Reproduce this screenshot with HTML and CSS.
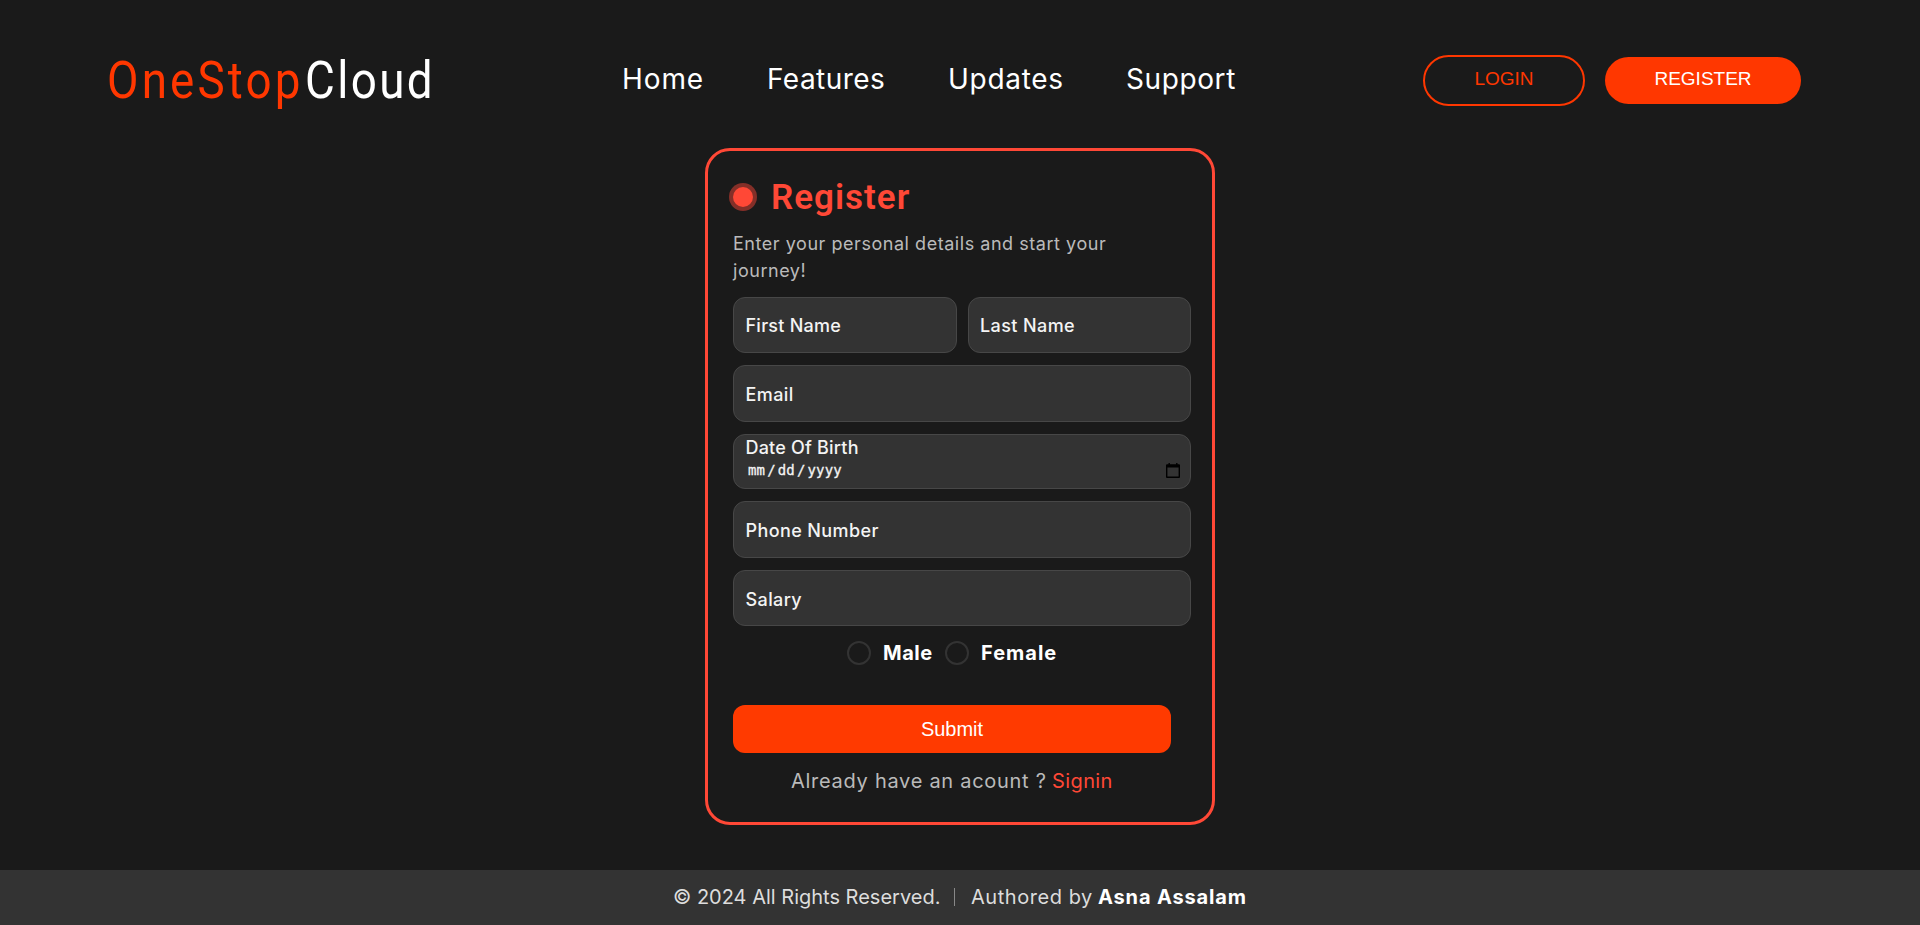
FILE: index.html
```html
<!DOCTYPE html>
<html lang="en">
<head>
<meta charset="utf-8">
<title>OneStopCloud - Register</title>
<link rel="stylesheet" href="styles.css">
</head>
<body>
<header class="header">
  <div class="logo"><span class="logo-accent">OneStop</span><span class="logo-rest">Cloud</span></div>
  <nav class="nav">
    <a class="nav-home">Home</a><a class="nav-features">Features</a><a class="nav-updates">Updates</a><a class="nav-support">Support</a>
  </nav>
  <div class="actions">
    <button class="btn btn-outline">LOGIN</button>
    <button class="btn btn-solid">REGISTER</button>
  </div>
</header>
<main class="main">
  <form class="card">
    <h1 class="title"><i class="dot"></i><span>Register</span></h1>
    <p class="message">Enter your personal details and start your<br>journey!</p>
    <div class="row">
      <div class="field short first"><span>First Name</span></div>
      <div class="field short"><span>Last Name</span></div>
    </div>
    <div class="field tall"><span>Email</span></div>
    <div class="field date">
      <span>Date Of Birth</span>
      <div class="date-value"><span class="mask"><b>mm</b><b>/</b><b>dd</b><b>/</b><b>yyyy</b></span>
        <svg class="cal" width="14" height="15" viewBox="0 0 14 15"><path fill="#000" fill-rule="evenodd" d="M2.500 0h1.400v1.300h6.200V0h1.400v1.300H13a1 1 0 0 1 1 1V14a1 1 0 0 1-1 1H1a1 1 0 0 1-1-1V2.300a1 1 0 0 1 1-1h1.500zM1.400 4.600v9h11.200v-9z"/></svg>
      </div>
    </div>
    <div class="field tall"><span>Phone Number</span></div>
    <div class="field"><span>Salary</span></div>
    <div class="radios">
      <label class="radio male"><i></i><span>Male</span></label>
      <label class="radio female"><i></i><span>Female</span></label>
    </div>
    <button class="submit" type="button">Submit</button>
    <p class="signin"><span class="ask">Already have an acount ?</span><a>Signin</a></p>
  </form>
</main>
<footer class="footer">
  <span class="copy">© 2024 All Rights Reserved.</span><i class="bar"></i><span class="by">Authored by</span><strong>Asna Assalam</strong>
</footer>
</body>
</html>
```

FILE: styles.css
```css
* { box-sizing: border-box; margin: 0; padding: 0; }

body {
  width: 1920px;
  height: 925px;
  display: flex;
  flex-direction: column;
  background: #1a1a1a;
  color: #fff;
  font-family: Inter, "Liberation Sans", sans-serif;
  overflow: hidden;
}

.header {
  height: 148px;
  display: flex;
  align-items: flex-start;
  padding-left: 107px;
}

.logo {
  width: 515px;
  display: flex;
  padding-top: 50px;
  font: 400 52px/62px Roboto, sans-serif;
}
.logo span { transform: scaleX(0.88); transform-origin: left; white-space: nowrap; }
.logo-accent { width: 198px; color: #ff3700; letter-spacing: 3.6px; }
.logo-rest { letter-spacing: 2.7px; }

.nav {
  display: flex;
  width: 801px;
  padding-top: 61px;
  font-size: 28px;
  line-height: 37px;
}
.nav-home { width: 145px; letter-spacing: 0.9px; }
.nav-features { width: 181px; letter-spacing: 0.45px; }
.nav-updates { width: 178px; letter-spacing: 0.7px; }
.nav-support { letter-spacing: 0.6px; }

.actions { display: flex; align-items: center; gap: 20px; padding-top: 55px; }
.btn {
  font: 19px/22px "Liberation Sans", Arial, sans-serif;
  border: 0;
  border-radius: 26px;
  height: 47px;
  width: 196px;
  padding-bottom: 3px;
}
.btn-outline { width: 162px; height: 51px; color: #ff3700; background: none; border: 2px solid #ff3700; }
.btn-solid { background: #ff3700; color: #fff; }

.main { display: flex; justify-content: center; height: 722px; }

.card {
  width: 510px;
  height: 677px;
  border: 3px solid #ff4836;
  border-radius: 25px;
  padding: 22px 21px 0 25px;
}

.title {
  display: flex;
  align-items: center;
  height: 48px;
  color: #ff4836;
  font: 600 35px/48px Roboto, sans-serif;
  letter-spacing: 1px;
}
.title span { padding-top: 1px; }
.dot {
  width: 20px;
  height: 20px;
  margin-right: 18px;
  border-radius: 50%;
  background: #ff4836;
  box-shadow: 0 0 0 4px #842f28;
}

.message { padding-top: 9px; height: 76px; color: #bababa; font-size: 18px; line-height: 27px; letter-spacing: 0.54px; }

.row { display: flex; gap: 11px; }
.row .field { flex: 1; }
.field {
  height: 56px;
  margin-bottom: 12px;
  padding: 17px 0 0 11.5px;
  border: 1px solid #474747;
  border-radius: 12px;
  background: #333;
  color: #f4f4f4;
  font-size: 18px;
  font-weight: 500;
  line-height: 23px;
  letter-spacing: 0.4px;
}
.short { padding-top: 16px; }
.first { letter-spacing: 0.25px; }
.tall { height: 57px; }
.date { height: 55px; padding-top: 1px; letter-spacing: 0.2px; }
.date-value { display: flex; justify-content: space-between; padding: 0 10px 0 1.5px; }
.mask { font: 14px/20px "DejaVu Sans Mono", monospace; letter-spacing: 0.15px; padding-top: 1px; -webkit-text-stroke: 0.3px #f4f4f4; }
.mask b { font-weight: 400; padding: 0 1px; }
.cal { margin-top: 4px; }

.radios { display: flex; padding: 3px 0 0 114px; height: 67px; }
.radio { display: flex; width: 98px; gap: 12px; font-size: 20px; font-weight: 700; line-height: 24px; }
.radio i { flex: none; width: 24px; height: 24px; border: 2px solid #333; border-radius: 50%; }
.male { letter-spacing: 0.5px; }
.female { width: 120px; letter-spacing: 1px; }

.submit {
  width: 438px;
  height: 48px;
  border: 0;
  border-radius: 12px;
  background: #ff3a00;
  color: #fff;
  font: 20px/24px "Liberation Sans", Arial, sans-serif;
}

.signin { display: flex; padding: 16px 0 0 58px; color: #bababa; font-size: 20px; line-height: 24px; }
.ask { width: 261px; white-space: nowrap; letter-spacing: 0.72px; }
.signin a { color: #ff4836; letter-spacing: 0.4px; }

.footer {
  display: flex;
  height: 55px;
  padding: 15px 0 0 673px;
  background: #333;
  color: #ddd;
  font-size: 20px;
  line-height: 24px;
}
.copy { width: 281px; white-space: nowrap; }
.bar { width: 1px; height: 18px; margin-top: 3px; background: #888; }
.by { width: 127px; margin-left: 16px; white-space: nowrap; letter-spacing: 0.55px; }
.footer strong { color: #fff; white-space: nowrap; letter-spacing: 0.85px; }
```
